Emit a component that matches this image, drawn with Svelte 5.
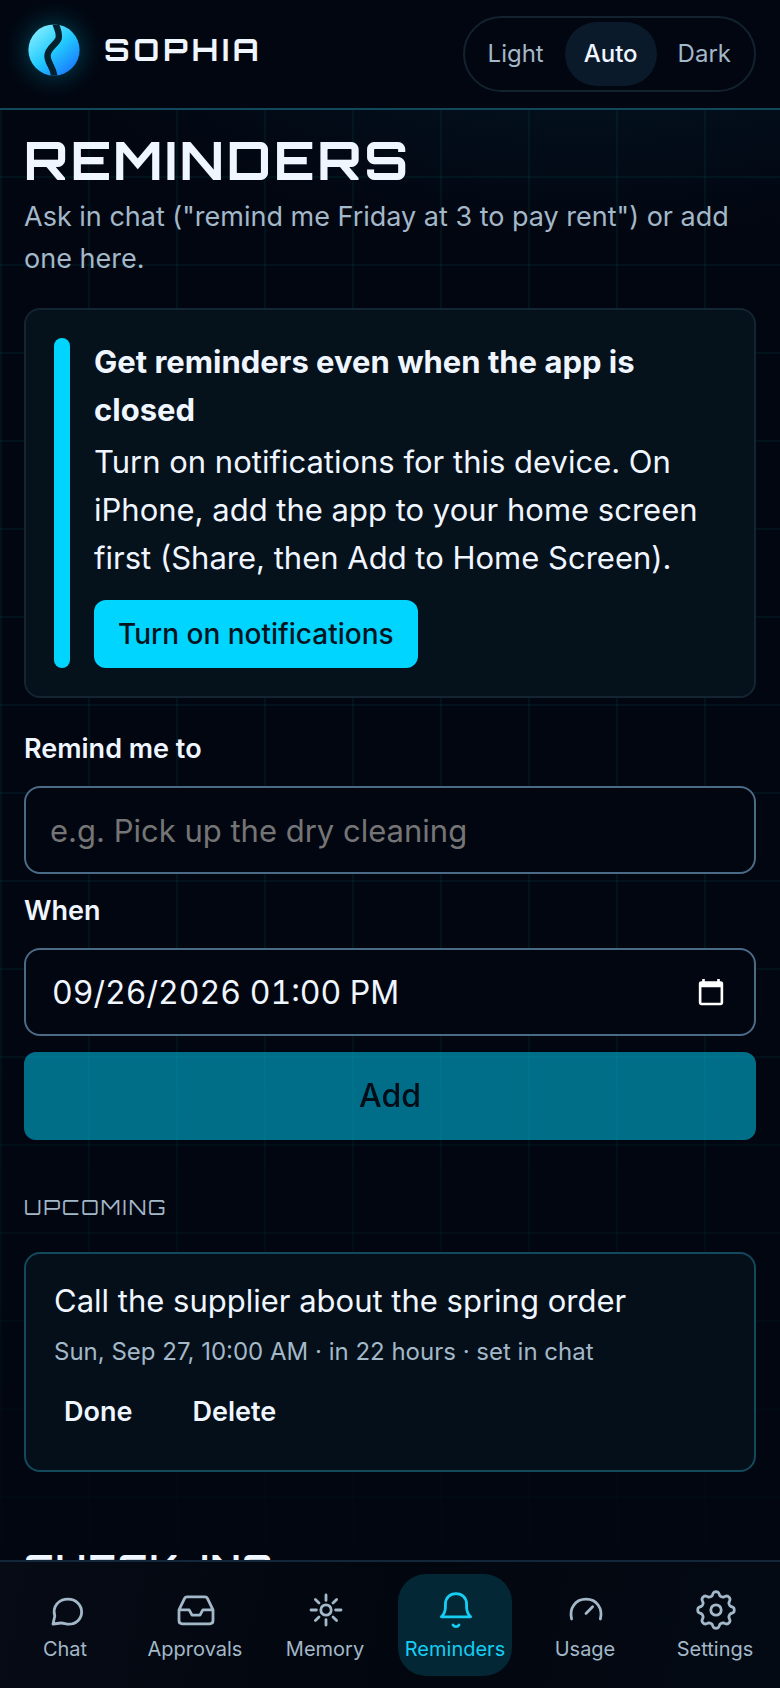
<script>
  let theme = $state('Auto');
  let page = $state('Reminders');
  let what = $state('');
  let when = $state('09/26/2026 01:00 PM');
  let notifications = $state(false);

  let reminders = $state([
    {
      id: 1,
      text: 'Call the supplier about the spring order',
      meta: 'Sun, Sep 27, 10:00 AM · in 22 hours · set in chat'
    }
  ]);

  const themes = ['Light', 'Auto', 'Dark'];

  // Outline of the settings cog, eight rounded teeth
  function gearPath() {
    const points = [];
    for (let i = 0; i < 128; i++) {
      const a = (i / 128) * Math.PI * 2;
      const r = 16.3 + 2.1 * Math.tanh(1.6 * Math.cos(8 * a));
      points.push(`${(23 + r * Math.cos(a)).toFixed(2)} ${(22 + r * Math.sin(a)).toFixed(2)}`);
    }
    return `M${points.join('L')}Z`;
  }

  const pages = [
    {
      name: 'Chat',
      icon: 'M10 36L11.8 28C9 18 16 11.2 25 11.2C33 11.2 38.6 17 38.6 24C38.6 31 33 36.2 26 36.2C23 36.2 20.5 34.8 18 35Z'
    },
    {
      name: 'Approvals',
      icon: 'M14 8.8H32Q33.6 8.8 34.3 10.2L40 21.8V32.6Q40 35.8 36.8 35.8H9.2Q6 35.8 6 32.6V21.8L11.7 10.2Q12.4 8.8 14 8.8ZM6 21.8H16.2L19 27.2H27L29.8 21.8H40'
    },
    {
      name: 'Memory',
      icon: 'M28.2 22A5.2 5.2 0 1 1 17.8 22A5.2 5.2 0 1 1 28.2 22ZM23 7V12.4M23 31.6V37M8 22H13.4M32.6 22H38M12.4 11.4L16 15M30 29L33.6 32.6M12.4 32.6L16 29M30 15L33.6 11.4'
    },
    {
      name: 'Reminders',
      icon: 'M8.4 28.8H37.6C34.6 26 33.6 23 33.6 19V16.4C33.6 9.8 29 5.6 23 5.6S12.4 9.8 12.4 16.4V19C12.4 23 11.4 26 8.4 28.8ZM20 37C21.5 39.2 24.5 39.2 26 37'
    },
    {
      name: 'Usage',
      icon: 'M8.6 31C6 20 12.5 11.2 23 11.2S40 20 37.4 31M23 25.4L29.6 18.8'
    },
    {
      name: 'Settings',
      icon: `${gearPath()}M28.2 22A5.2 5.2 0 1 1 17.8 22A5.2 5.2 0 1 1 28.2 22Z`
    }
  ];

  function addReminder(event) {
    event.preventDefault();
    reminders.push({ id: Date.now(), text: what, meta: when });
    what = '';
  }

  function removeReminder(id) {
    reminders = reminders.filter((r) => r.id !== id);
  }
</script>

<div class="app">
  <header>
    <div class="brand">
      <svg class="logo" viewBox="0 0 60 60" aria-hidden="true">
        <defs>
          <linearGradient id="orb" x1="0.15" y1="0.1" x2="0.85" y2="0.9">
            <stop offset="0" stop-color="#7deaff" />
            <stop offset="0.5" stop-color="#22cbff" />
            <stop offset="1" stop-color="#1a7dff" />
          </linearGradient>
          <clipPath id="orb-clip"><circle cx="30" cy="30" r="25.6" /></clipPath>
        </defs>
        <circle cx="30" cy="30" r="25.6" fill="url(#orb)" />
        <path
          clip-path="url(#orb-clip)"
          d="M31 2C33 9 36.4 13 34.4 19C32 25 23.5 28 23.5 36C23.5 44 30 47 30.5 58"
          fill="none"
          stroke="#04212e"
          stroke-width="6.4"
        />
      </svg>
      <span class="name">SOPHIA</span>
    </div>

    <div class="themes" role="group" aria-label="Theme">
      {#each themes as t}
        <button class:selected={theme === t} aria-pressed={theme === t} onclick={() => (theme = t)}>{t}</button>
      {/each}
    </div>
  </header>

  <main>
    <h1>REMINDERS</h1>
    <p class="intro">Ask in chat ("remind me Friday at 3 to pay rent") or add one here.</p>

    {#if !notifications}
      <section class="notice">
        <div class="bar"></div>
        <div class="notice-body">
          <h2>Get reminders even when the app is closed</h2>
          <p>
            Turn on notifications for this device. On iPhone, add the app to your home screen first
            (Share, then Add to Home Screen).
          </p>
          <button class="primary" onclick={() => (notifications = true)}>Turn on notifications</button>
        </div>
      </section>
    {/if}

    <form onsubmit={addReminder}>
      <label for="what">Remind me to</label>
      <div class="field">
        <input id="what" type="text" placeholder="e.g. Pick up the dry cleaning" bind:value={what} />
      </div>
      <label for="when">When</label>
      <div class="field">
        <input id="when" class="date" type="text" bind:value={when} />
        <button type="button" class="picker" aria-label="Open calendar">
          <svg viewBox="0 0 32 32" aria-hidden="true">
            <path
              fill-rule="evenodd"
              d="M6.6 2H9.4V4.4H22.6V2H25.4V4.4H26.4Q29 4.4 29 7V27.4Q29 30 26.4 30H5.6Q3 30 3 27.4V7Q3 4.4 5.6 4.4H6.6ZM5.8 11V27.4H26.2V11Z"
            />
          </svg>
        </button>
      </div>
      <button class="primary add" disabled={!what}>Add</button>
    </form>

    <h2 class="group">UPCOMING</h2>
    <ul class="list">
      {#each reminders as r (r.id)}
        <li>
          <p class="what">{r.text}</p>
          <p class="meta">{r.meta}</p>
          <div class="actions">
            <button onclick={() => removeReminder(r.id)}>Done</button>
            <button onclick={() => removeReminder(r.id)}>Delete</button>
          </div>
        </li>
      {/each}
    </ul>

    <h2 class="checkins">CHECK-INS</h2>
  </main>

  <nav>
    {#each pages as p}
      <a
        href="#{p.name.toLowerCase()}"
        class:active={page === p.name}
        aria-current={page === p.name ? 'page' : undefined}
        onclick={() => (page = p.name)}
      >
        <svg viewBox="0 0 44 44" aria-hidden="true"><path d={p.icon} /></svg>
        {p.name}
      </a>
    {/each}
  </nav>
</div>

<style>
  :global(body) {
    background: #020611;
  }

  .app {
    --text: #f0f6ff;
    --muted: #a3b8c8;
    --accent: #00d5ff;
    --display: Orbitron, 'DejaVu Sans', sans-serif;
    position: relative;
    isolation: isolate;
    display: flex;
    flex-direction: column;
    height: 100vh;
    box-sizing: border-box;
    color: var(--text);
    background: radial-gradient(ellipse 70% 14% at 75% 0, #031723, transparent) #020611;
    font-family: Inter, sans-serif;
    font-size: 31px;
    line-height: 48px;
    color-scheme: dark;
  }

  /* faint grid behind the page */
  .app::before {
    content: '';
    position: absolute;
    inset: 0;
    z-index: -1;
    background:
      linear-gradient(rgba(0, 230, 200, 0.06) 2px, transparent 2px) 0 0 / 88px 88px,
      linear-gradient(90deg, rgba(0, 230, 200, 0.06) 2px, transparent 2px) 0 0 / 88px 88px;
    mask-image: linear-gradient(#000 55%, transparent 100%);
  }

  h1,
  h2,
  p,
  ul {
    margin: 0;
    padding: 0;
  }

  button,
  input {
    font: inherit;
    color: inherit;
  }

  button {
    border: none;
    background: none;
    cursor: pointer;
  }

  header {
    display: flex;
    justify-content: space-between;
    align-items: flex-start;
    padding: 16px 24px;
    border-bottom: 2px solid #12485b;
    background: #020610;
  }

  .brand {
    display: flex;
    align-items: center;
    gap: 20px;
    height: 68px;
  }

  .logo {
    width: 60px;
    height: 60px;
    overflow: visible;
    filter: drop-shadow(0 0 14px rgba(0, 213, 255, 0.35));
  }

  .name {
    font-family: var(--display);
    font-size: 31px;
    font-weight: 700;
    letter-spacing: 4px;
  }

  .themes {
    display: flex;
    gap: 2px;
    padding: 4px;
    border: 2px solid #12222f;
    border-radius: 38px;
  }

  .themes button {
    height: 64px;
    padding: 0 19px;
    border-radius: 32px;
    color: var(--muted);
    font-size: 24px;
  }

  .themes .selected {
    background: #0b1a2a;
    color: var(--text);
    font-weight: 500;
  }

  main {
    flex: 1;
    min-height: 0;
    overflow: hidden auto;
    scrollbar-width: none;
    padding: 20px 24px 0;
  }

  h1 {
    font-family: var(--display);
    font-size: 53px;
    line-height: 60px;
    letter-spacing: 3px;
  }

  .intro {
    margin-top: 6px;
    color: var(--muted);
    font-size: 27px;
    line-height: 42px;
  }

  .notice {
    display: flex;
    gap: 24px;
    margin-top: 28px;
    padding: 28px;
    border: 2px solid #132532;
    border-radius: 16px;
    background: #05111b;
  }

  .bar {
    flex: none;
    width: 16px;
    border-radius: 8px;
    background: var(--accent);
  }

  .notice-body {
    display: flex;
    flex-direction: column;
    align-items: flex-start;
  }

  .notice h2 {
    margin-bottom: 4px;
    font-size: 31px;
    font-weight: 700;
  }

  .primary {
    border-radius: 12px;
    background: var(--accent);
    color: #04141f;
    font-weight: 500;
  }

  .notice .primary {
    height: 68px;
    margin-top: 18px;
    padding: 0 24px;
    font-size: 28px;
  }

  form {
    display: flex;
    flex-direction: column;
    gap: 16px;
    margin-top: 30px;
  }

  label {
    font-size: 27px;
    font-weight: 600;
    line-height: 42px;
  }

  .field {
    display: flex;
    align-items: center;
    height: 88px;
    box-sizing: border-box;
    padding: 0 28px 0 24px;
    border: 2px solid #4b6a86;
    border-radius: 16px;
    background: #020611;
  }

  input {
    flex: 1;
    min-width: 0;
    height: 84px;
    box-sizing: border-box;
    padding: 0;
    border: none;
    outline: none;
    background: none;
  }

  input::placeholder {
    color: #757575;
  }

  .date {
    padding-left: 2px;
    font-size: 32px;
    font-variant-numeric: tabular-nums;
  }

  .picker {
    display: flex;
    padding: 0;
  }

  .picker svg {
    width: 30px;
    height: 30px;
    fill: #fff;
  }

  .add {
    height: 88px;
    font-size: 32px;
  }

  .add:disabled {
    opacity: 0.5;
    cursor: default;
  }

  .group {
    margin: 52px 0 30px;
    color: var(--muted);
    font-family: var(--display);
    font-size: 21px;
    font-weight: 400;
    line-height: 30px;
    letter-spacing: 2px;
  }

  .list {
    list-style: none;
  }

  li {
    padding: 24px 28px 22px;
    border: 2px solid #13495c;
    border-radius: 16px;
    background: #040f19;
  }

  .what {
    line-height: 46px;
  }

  .meta {
    margin: 10px 0 6px;
    color: var(--muted);
    font-size: 24px;
    line-height: 36px;
  }

  .actions {
    display: flex;
    gap: 40px;
  }

  .actions button {
    height: 72px;
    padding: 0 10px;
    font-size: 27px;
    font-weight: 600;
  }

  .checkins {
    margin-top: 74px;
    font-family: var(--display);
    font-size: 36px;
    line-height: 44px;
    letter-spacing: 2px;
  }

  nav {
    display: grid;
    grid-template-columns: repeat(6, minmax(0, 1fr));
    gap: 16px;
    padding: 12px 8px;
    border-top: 2px solid #13263a;
    background: linear-gradient(100deg, #060b15, #02060f 50%, #040a14);
  }

  nav a {
    display: flex;
    flex-direction: column;
    align-items: center;
    gap: 3px;
    padding: 14px 0 13px;
    border-radius: 28px;
    color: var(--muted);
    font-size: 20px;
    line-height: 28px;
    text-decoration: none;
  }

  nav .active {
    background: #032735;
    color: #16cdf2;
  }

  nav svg {
    width: 44px;
    height: 44px;
    fill: none;
    stroke: currentColor;
    stroke-width: 2.8;
    stroke-linecap: round;
    stroke-linejoin: round;
  }
</style>
